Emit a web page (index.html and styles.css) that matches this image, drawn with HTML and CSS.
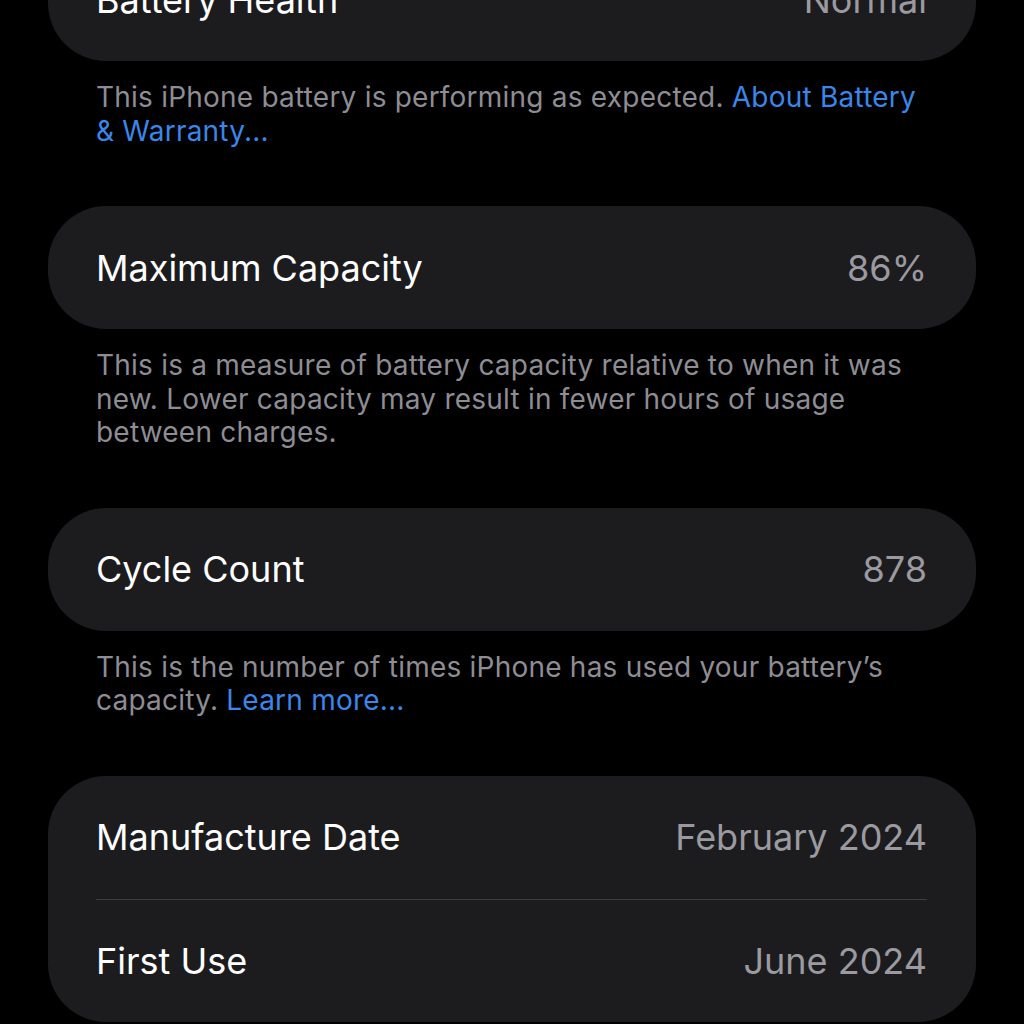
FILE: index.html
```html
<!DOCTYPE html>
<html lang="en">
<head>
    <meta charset="UTF-8">
    <meta name="viewport" content="width=device-width, initial-scale=1.0">
    <title>Battery Health</title>
    <link rel="stylesheet" href="styles.css">
</head>
<body>

    <div class="settings">
        <div class="group">
            <div class="card">
                <div class="row">
                    <span class="row-title">Battery Health</span>
                    <span class="row-value">Normal</span>
                </div>
            </div>
            <div class="footer">
                This iPhone battery is performing as expected. <a href="#">About Battery<br>&amp; Warranty...</a>
            </div>
        </div>

        <div class="group">
            <div class="card">
                <div class="row">
                    <span class="row-title">Maximum Capacity</span>
                    <span class="row-value">86%</span>
                </div>
            </div>
            <div class="footer">
                This is a measure of battery capacity relative to when it was<br>
                new. Lower capacity may result in fewer hours of usage<br>
                between charges.
            </div>
        </div>

        <div class="group">
            <div class="card">
                <div class="row">
                    <span class="row-title">Cycle Count</span>
                    <span class="row-value">878</span>
                </div>
            </div>
            <div class="footer">
                This is the number of times iPhone has used your battery’s<br>
                capacity. <a href="#">Learn more...</a>
            </div>
        </div>

        <div class="group">
            <div class="card">
                <div class="row">
                    <span class="row-title">Manufacture Date</span>
                    <span class="row-value">February 2024</span>
                </div>
                <div class="row">
                    <span class="row-title">First Use</span>
                    <span class="row-value">June 2024</span>
                </div>
            </div>
        </div>
    </div>

</body>
</html>
```

FILE: styles.css
```css
body {
    font-family: 'Inter', 'Liberation Sans', sans-serif;
    margin: 0;
    padding: 0;
    background-color: #000000;
    overflow: hidden;
}

.settings {
    padding: 0 48px;
    margin-top: -62px; /* страница прокручена вниз */
}

.group {
    margin-bottom: 58px;
}

.card {
    background: #1c1c1e;
    border-radius: 58px;
    padding: 0 49px 0 48px;
}

.row {
    height: 123px;
    display: flex;
    justify-content: space-between;
    align-items: center;
    font-size: 36px;
}

.row + .row {
    border-top: 1px solid #3d3d40;
    height: 122px;
}

.row-title {
    color: #ffffff;
}

.row-value {
    color: #9a9aa0;
}

.footer {
    padding: 20px 0 0 48px;
    font-size: 28px;
    line-height: 33.5px;
    letter-spacing: 0.22px;
    color: #8d8d93;
}

.footer a {
    color: #3b86e8;
    text-decoration: none;
}
```
